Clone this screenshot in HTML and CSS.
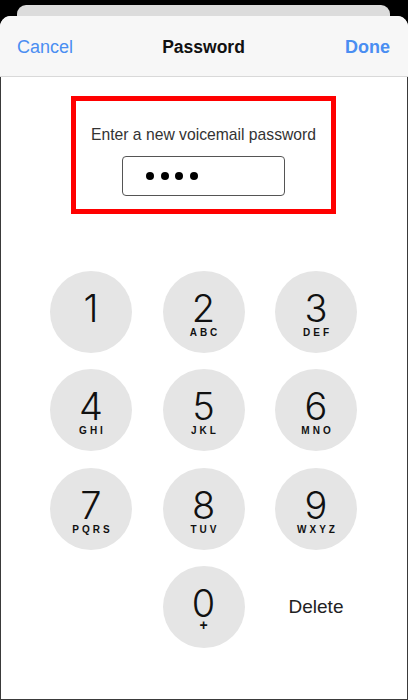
FILE: index.html
```html
<!DOCTYPE html>
<html>
<head>
<meta charset="utf-8">
<link rel="stylesheet" href="styles.css">
</head>
<body>
<div class="screen">
  <div class="back-card"></div>
  <div class="sheet">
    <div class="navbar">
      <span class="nav-btn left">Cancel</span>
      <span class="nav-title">Password</span>
      <span class="nav-btn right">Done</span>
    </div>
    <div class="content">
      <div class="highlight">
        <div class="prompt">Enter a new voicemail password</div>
        <div class="field">
          <span class="dot"></span><span class="dot"></span><span class="dot"></span><span class="dot"></span>
        </div>
      </div>
      <div class="keypad">
        <div class="key"><span class="num">1</span></div>
        <div class="key"><span class="num">2</span><span class="letters">ABC</span></div>
        <div class="key"><span class="num">3</span><span class="letters">DEF</span></div>
        <div class="key"><span class="num">4</span><span class="letters">GHI</span></div>
        <div class="key"><span class="num">5</span><span class="letters">JKL</span></div>
        <div class="key"><span class="num">6</span><span class="letters">MNO</span></div>
        <div class="key"><span class="num">7</span><span class="letters">PQRS</span></div>
        <div class="key"><span class="num">8</span><span class="letters">TUV</span></div>
        <div class="key"><span class="num">9</span><span class="letters">WXYZ</span></div>
        <div class="blank"></div>
        <div class="key"><span class="num">0</span><span class="letters plus">+</span></div>
        <div class="delete">Delete</div>
      </div>
    </div>
  </div>
</div>
</body>
</html>
```
FILE: styles.css
```css
html, body {
  margin: 0;
  padding: 0;
  background: #000;
}
body {
  font-family: "Liberation Sans", Arial, sans-serif;
  width: 408px;
  height: 700px;
  overflow: hidden;
}
.screen {
  display: flex;
  flex-direction: column;
  height: 700px;
  padding-top: 5px;
  box-sizing: border-box;
}
.back-card {
  height: 14px;
  margin: 0 18px 0 17px;
  background: #dcdcdc;
  border-radius: 9px 9px 0 0;
  margin-bottom: -3px;
}
.sheet {
  flex: 1;
  display: flex;
  flex-direction: column;
  border-radius: 11px 11px 0 0;
  overflow: hidden;
  background: #fff;
}
.navbar {
  height: 61px;
  background: #f7f7f7;
  border-bottom: 1px solid #d9d9d9;
  display: grid;
  grid-template-columns: 1fr auto 1fr;
  align-items: center;
  padding: 2px 18px 0 17px;
  box-sizing: border-box;
  font-size: 18px;
  flex-shrink: 0;
}
.nav-btn {
  color: #4a8ef2;
}
.nav-btn.left {
  justify-self: start;
}
.nav-btn.right {
  justify-self: end;
  font-weight: bold;
}
.nav-title {
  font-weight: bold;
  color: #111;
  font-size: 17.5px;
}
.content {
  flex: 1;
  border: 1px solid #3a3a3a;
  border-top: none;
  background: #fff;
}
.highlight {
  width: 265px;
  height: 118px;
  box-sizing: border-box;
  border: 5px solid #ff0000;
  margin: 19px 0 0 70px;
  display: flex;
  flex-direction: column;
  align-items: center;
}
.prompt {
  margin-top: 25px;
  font-size: 15.7px;
  line-height: 18px;
  color: #333;
}
.field {
  margin-top: 12px;
  width: 163px;
  height: 40px;
  box-sizing: border-box;
  border: 1px solid #555;
  border-radius: 4px;
  display: flex;
  align-items: center;
  gap: 6.7px;
  padding-left: 23px;
}
.dot {
  width: 8px;
  height: 8px;
  border-radius: 50%;
  background: #000;
}
.keypad {
  display: grid;
  grid-template-columns: repeat(3, 82px);
  grid-auto-rows: 82px;
  column-gap: 30.5px;
  row-gap: 16.3px;
  margin: 57px 0 0 49px;
}
.key {
  width: 82px;
  height: 82px;
  border-radius: 50%;
  background: #e5e5e5;
  display: flex;
  flex-direction: column;
  align-items: center;
  justify-content: flex-start;
  padding-top: 22px;
  box-sizing: border-box;
  color: #111;
}
.num {
  font-family: Inter, "Liberation Sans", sans-serif;
  font-weight: 300;
  font-size: 38px;
  line-height: 30px;
}
.letters {
  font-size: 10px;
  font-weight: bold;
  letter-spacing: 3px;
  margin-right: -3px;
  line-height: 10px;
  margin-top: 5px;
}
.letters.plus {
  font-size: 14px;
  margin-top: 2px;
}
.delete {
  display: flex;
  align-items: center;
  justify-content: center;
  font-size: 19px;
  color: #222;
}
```
